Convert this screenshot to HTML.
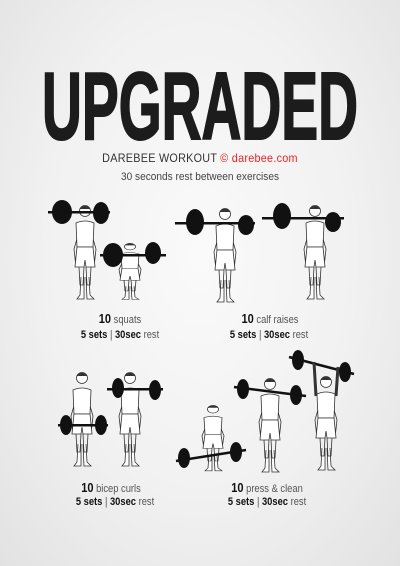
<!DOCTYPE html>
<html><head><meta charset="utf-8"><style>
html,body{margin:0;padding:0}
body{width:400px;height:566px;overflow:hidden;position:relative;background:radial-gradient(ellipse at 50% 45%,#fafafa 0%,#f1f1f1 55%,#e2e2e2 100%);font-family:"Liberation Sans",sans-serif}
.t{position:absolute;left:0;width:400px;text-align:center}
#title{position:absolute;left:200px;top:52px;font-size:96px;font-weight:bold;color:#1c1c1c;transform:translateX(-50%) scaleX(0.575);line-height:110px;white-space:nowrap;-webkit-text-stroke:2px #1c1c1c}
.lab{position:absolute;font-size:11px;color:#555;transform:scaleX(.85);white-space:nowrap;text-align:center;width:160px}
.lab b{color:#111;font-size:13px}
.sets{position:absolute;font-size:11px;color:#555;transform:scaleX(.85);white-space:nowrap;text-align:center;width:160px}
.sets b{color:#111}
</style></head><body>
<div id="title">UPGRADED</div>
<div class="t" style="top:151px;font-size:12px;color:#333;letter-spacing:.3px;transform:scaleX(.9)">DAREBEE WORKOUT <span style="color:#e22">© darebee.com</span></div>
<div class="t" style="top:171px;font-size:11px;color:#444;transform:scaleX(.92)">30 seconds rest between exercises</div>

<svg width="400" height="566" style="position:absolute;left:0;top:0" viewBox="0 0 400 566">
<defs>
<g id="p" fill="#fff" stroke="#333" stroke-width="0.8">
<path d="M-4 20 L-11 44 L-9 62 M4 20 L11 44 L9 62" fill="none"/>
<path d="M-9 18 Q0 14 9 18 L8 42 L-8 42 Z"/>
<path d="M-4 72 L-5 90 L-8 94 L-1 94 L-1 72 M4 72 L5 90 L9 94 L2 94 L1 72"/>
<path d="M-8 42 L8 42 L10 62 L1 62 L0 55 L-1 62 L-10 62 Z"/>
<path d="M-6 62 L-5 80 L-2 80 L-1 62 M6 62 L5 80 L2 80 L1 62" fill="none"/>
<circle cx="0" cy="6" r="5.5"/>
<path d="M-5 4 Q0 -2 5 4" fill="#333"/>
</g>
</defs>
<g fill="#111">
<use href="#p" x="85" y="205"/>
<rect x="48" y="211" width="62" height="2.5"/>
<ellipse cx="62" cy="212" rx="10" ry="12"/><ellipse cx="101" cy="213" rx="8" ry="11"/>
<g transform="translate(130,243) scale(1,0.6)"><use href="#p"/></g>
<rect x="100" y="254" width="66" height="2.5"/>
<ellipse cx="113" cy="255" rx="10" ry="12"/><ellipse cx="153" cy="253" rx="8" ry="11"/>
<use href="#p" x="225" y="208"/>
<rect x="175" y="222" width="80" height="2.5"/>
<ellipse cx="195" cy="222" rx="9" ry="13"/><ellipse cx="246" cy="225" rx="8" ry="10"/>
<use href="#p" x="315" y="205"/>
<rect x="262" y="217" width="82" height="2.5"/>
<ellipse cx="282" cy="216" rx="9" ry="13"/><ellipse cx="333" cy="222" rx="8" ry="10"/>
<use href="#p" x="82" y="372"/>
<rect x="58" y="424" width="50" height="2.5"/>
<ellipse cx="66" cy="425" rx="6" ry="10"/><ellipse cx="101" cy="425" rx="6" ry="10"/>
<use href="#p" x="130" y="372"/>
<rect x="107" y="388" width="56" height="2.5"/>
<ellipse cx="118" cy="388" rx="6" ry="10"/><ellipse cx="155" cy="390" rx="6" ry="10"/>
<g transform="translate(213,405) scale(1,0.7)"><use href="#p"/></g>
<path d="M176 461 L246 450" stroke="#111" stroke-width="2.5"/>
<ellipse cx="184" cy="458" rx="6" ry="10"/><ellipse cx="236" cy="452" rx="6" ry="10"/>
<use href="#p" x="270" y="378"/>
<path d="M234 387 L306 396" stroke="#111" stroke-width="2.5"/>
<ellipse cx="243" cy="389" rx="6" ry="10"/><ellipse cx="296" cy="395" rx="6" ry="10"/>
<use href="#p" x="326" y="376"/>
<path d="M289 357 L354 374" stroke="#111" stroke-width="2.5"/>
<path d="M316 396 L314 362 M336 396 L338 367" stroke="#333" stroke-width="3"/>
<ellipse cx="298" cy="360" rx="6" ry="10"/><ellipse cx="345" cy="372" rx="6" ry="10"/>
</g>
</svg>

<div class="lab" style="left:40px;top:311px"><b>10</b> squats</div>
<div class="sets" style="left:40px;top:329px"><b>5 sets</b> | <b>30sec</b> rest</div>
<div class="lab" style="left:190px;top:311px"><b>10</b> calf raises</div>
<div class="sets" style="left:189px;top:329px"><b>5 sets</b> | <b>30sec</b> rest</div>
<div class="lab" style="left:31px;top:480px"><b>10</b> bicep curls</div>
<div class="sets" style="left:35px;top:496px"><b>5 sets</b> | <b>30sec</b> rest</div>
<div class="lab" style="left:187px;top:480px"><b>10</b> press &amp; clean</div>
<div class="sets" style="left:187px;top:496px"><b>5 sets</b> | <b>30sec</b> rest</div>
</body></html>
